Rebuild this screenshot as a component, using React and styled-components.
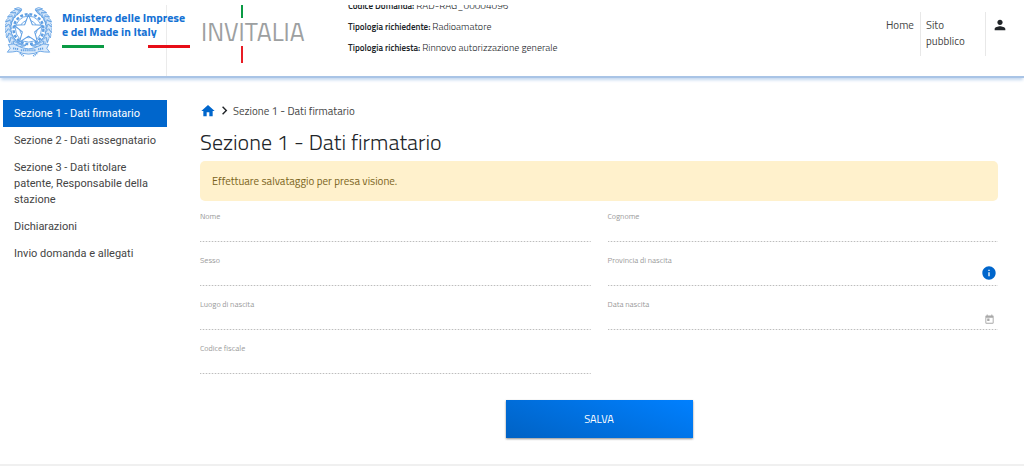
import React from "react";
import styled, { createGlobalStyle } from "styled-components";
import { MdHome, MdChevronRight, MdPerson, MdInfo, MdToday } from "react-icons/md";

const blue = "#0066cc";
const sans = `"Titillium Web", Roboto, "Noto Sans", sans-serif`;

const GlobalStyle = createGlobalStyle`
  *, *::before, *::after { box-sizing: border-box; }
  body {
    margin: 0;
    padding-top: 5px;
    background: #fff;
    color: #212529;
    font-family: ${sans};
    font-size: 11px;
    line-height: 16px;
  }
  h1, p, ul, ol, dl, dd { margin: 0; padding: 0; }
  ul, ol { list-style: none; }
  a { color: inherit; text-decoration: none; }
`;

const Header = styled.header`
  border-bottom: 2px solid #a9c4e6;
  box-shadow: 0 3px 3px -1px #c3d7ef;
`;

const HeaderInner = styled.div`
  display: flex;
  height: 71px;
  overflow: hidden;
`;

const MinistryCell = styled.div`
  flex: none;
  display: flex;
  gap: 10px;
  width: 167px;
  padding-left: 5px;
  border-right: 1px solid #ebebeb;
`;

const Emblem = styled.svg`
  flex: none;
  width: 47px;
  height: 52px;
`;

const MinistryName = styled.p`
  flex: none;
  width: 128px;
  padding-top: 6px;
  color: #1471d4;
  font-size: 12px;
  font-weight: 700;
  line-height: 14px;
  white-space: nowrap;
`;

const Flag = styled.span`
  display: flex;
  justify-content: space-between;
  margin-top: 6px;

  &::before, &::after {
    content: "";
    width: 42px;
    height: 3px;
    background: #0a9a44;
  }
  &::after { background: #e70d17; }
`;

const Invitalia = styled.div`
  flex: none;
  display: flex;
  align-items: flex-start;
  width: 104px;
  margin-left: 34px;
  color: #9da0a1;
  font-size: 25px;
  line-height: 18px;
  padding-top: 18px;
`;

const LongLetter = styled.span`
  display: flex;
  flex-direction: column;
  align-items: center;
  gap: 5px;
  margin-top: -18px;

  &::before, &::after {
    content: "";
    width: 2px;
    height: 13px;
    background: #0a9a44;
  }
  &::after { height: 17px; background: #e81c25; }
`;

const Request = styled.dl`
  align-self: flex-end;
  display: grid;
  gap: 5px;
  margin-left: 43px;
  padding-bottom: 20px;
  white-space: nowrap;
`;

const RequestItem = styled.div`
  display: flex;
  align-items: baseline;
  gap: 2px;

  dt { font-size: 9px; font-weight: 600; }
  dd { font-size: 10px; font-weight: 300; }
`;

const TopNav = styled.nav`
  display: flex;
  align-items: flex-start;
  margin-left: auto;
  padding: 7px 16px 0 0;
  color: #444;
`;

const NavLink = styled.a`
  width: ${(p) => (p.$wide ? 65 : 40)}px;
  height: 44px;
  padding: 5px 0 5px 5px;
  border-right: 1px solid #e8e8e8;
`;

const UserButton = styled.button`
  display: flex;
  margin: 5px 0 0 6px;
  padding: 0;
  border: 0;
  background: none;
  color: #212529;
  font-size: 16px;
`;

const Page = styled.div`
  display: flex;
  align-items: flex-start;
  gap: 33px;
  padding: 22px 26px 26px 3px;
  border-bottom: 2px solid #f0f0f0;
`;

const SideNav = styled.nav`
  flex: none;
  width: 164px;
  font-family: Roboto, sans-serif;
  color: #444;
`;

const SideLink = styled.a`
  display: block;
  padding: 6px 11px 5px;
  background: ${(p) => (p.$active ? blue : "transparent")};
  color: ${(p) => (p.$active ? "#fff" : "inherit")};
`;

const Main = styled.main`
  flex: 1;
  min-width: 0;
  padding-top: 2px;
`;

const Breadcrumb = styled.ol`
  display: flex;
  align-items: center;
  color: #444;

  li { display: flex; align-items: center; }
  a { color: ${blue}; }
  svg { display: block; }
`;

const Title = styled.h1`
  margin: 9px 0 5px;
  font-size: 22px;
  font-weight: 300;
  line-height: 28px;
`;

const Alert = styled.div`
  padding: 12px;
  border-radius: 5px;
  background: #fff1cc;
  color: #7a6320;
`;

const Fields = styled.div`
  display: grid;
  grid-template-columns: 1fr 1fr;
  gap: 13px 17px;
  margin-top: 10px;
`;

const Field = styled.div`
  display: flex;
  flex-direction: column;
`;

const Label = styled.label`
  color: #9b9b9b;
  font-size: 8px;
  line-height: 10px;
`;

const Control = styled.div`
  display: flex;
  height: 21px;
  padding-right: 2px;
  background: repeating-linear-gradient(90deg, #bdbdbd 0 1px, #ececec 1px 3px) bottom / 100% 1px no-repeat;
`;

const Input = styled.input`
  flex: 1;
  min-width: 0;
  height: 20px;
  padding: 0;
  border: 0;
  background: none;
  font: inherit;
`;

const IconButton = styled.button`
  display: flex;
  align-items: ${(p) => (p.$muted ? "center" : "flex-start")};
  justify-content: center;
  width: 14px;
  padding: 0;
  border: 0;
  background: none;
  color: ${(p) => (p.$muted ? "#a8a8a8" : blue)};

  svg { flex: none; }
`;

const Actions = styled.div`
  display: flex;
  justify-content: center;
  margin-top: 26px;
`;

const SaveButton = styled.button`
  width: 187px;
  height: 38px;
  border: 0;
  background: linear-gradient(20deg, #0062c4, #0080ff);
  box-shadow: 0 1px 2px rgba(0, 0, 0, 0.45);
  color: #fff;
  font-family: inherit;
  font-size: 11px;
`;

const leaves = Array.from({ length: 11 }, (_, i) => 208 + i * 13);

function Leaf({ angle }) {
  return (
    <path
      transform={`rotate(${angle} 24 24)`}
      d="M24 4 Q20 3 18 0 Q23 -1 25 3 Q23 6 18 7 Q20 3 24 4 M18 0 L24 4 L18 7"
    />
  );
}

function RepublicEmblem() {
  return (
    <Emblem viewBox="0 0 48 54" role="img" aria-label="Repubblica Italiana">
      <g fill="#d6e7f9" stroke="#5f9fe3" strokeWidth="0.7" strokeLinejoin="round">
        {leaves.map((a) => <Leaf key={a} angle={a} />)}
        <g transform="matrix(-1 0 0 1 48 0)">
          {leaves.map((a) => <Leaf key={a} angle={a} />)}
        </g>
      </g>
      <g fill="none" stroke="#5f9fe3">
        <circle cx="24" cy="25" r="15.5" strokeWidth="2.6" strokeDasharray="3 1.9" fill="#fff" />
        <circle cx="24" cy="25" r="13.5" strokeWidth="0.9" />
        <circle cx="24" cy="25" r="9" strokeWidth="0.9" />
        <path d="M24 10 L28 20.5 L39 21 L30.4 28 L33.4 38.5 L24 32.4 L14.6 38.5 L17.6 28 L9 21 L20 20.5Z" fill="#fff" strokeWidth="1.1" strokeLinejoin="round" />
        <path d="M3 41 Q9 39 14 43 Q24 48 34 43 Q39 39 45 41 L43 45 L46 49 Q40 49 36 48 Q24 54 12 48 Q8 49 2 49 L5 45Z" fill="#d9e9fa" strokeWidth="0.9" />
        <path d="M8 45 L14 46 M16 47 L32 47 M34 46 L40 45 M15 50 L19 53 M33 50 L29 53" strokeWidth="2" strokeDasharray="1.2 0.8" />
      </g>
    </Emblem>
  );
}

const sections = [
  "Sezione 1 - Dati firmatario",
  "Sezione 2 - Dati assegnatario",
  "Sezione 3 - Dati titolare patente, Responsabile della stazione",
  "Dichiarazioni",
  "Invio domanda e allegati",
];

const request = [
  ["Codice Domanda:", "RAD-RAG_00004096"],
  ["Tipologia richiedente:", "Radioamatore"],
  ["Tipologia richiesta:", "Rinnovo autorizzazione generale"],
];

const fields = [
  { id: "nome", label: "Nome" },
  { id: "cognome", label: "Cognome" },
  { id: "sesso", label: "Sesso" },
  { id: "provincia", label: "Provincia di nascita", icon: "info" },
  { id: "luogo", label: "Luogo di nascita" },
  { id: "data", label: "Data nascita", icon: "date" },
  { id: "codice", label: "Codice fiscale" },
];

export default function App() {
  return (
    <>
      <GlobalStyle />
      <Header>
        <HeaderInner>
          <MinistryCell>
            <RepublicEmblem />
            <MinistryName>
              Ministero delle Imprese<br />e del Made in Italy
              <Flag />
            </MinistryName>
          </MinistryCell>
          <Invitalia>
            INV<LongLetter>I</LongLetter>TALIA
          </Invitalia>
          <Request>
            {request.map(([term, value]) => (
              <RequestItem key={term}><dt>{term}</dt><dd>{value}</dd></RequestItem>
            ))}
          </Request>
          <TopNav>
            <NavLink href="#home">Home</NavLink>
            <NavLink href="#sito" $wide>Sito pubblico</NavLink>
            <UserButton type="button" aria-label="Profilo"><MdPerson /></UserButton>
          </TopNav>
        </HeaderInner>
      </Header>
      <Page>
        <SideNav>
          <ul>
            {sections.map((s, i) => (
              <li key={s}><SideLink href={`#sezione-${i + 1}`} $active={i === 0}>{s}</SideLink></li>
            ))}
          </ul>
        </SideNav>
        <Main>
          <Breadcrumb>
            <li>
              <a href="#home" aria-label="Home"><MdHome size={16} /></a>
              <MdChevronRight size={17} color="#212529" />
            </li>
            <li>Sezione 1 - Dati firmatario</li>
          </Breadcrumb>
          <Title>Sezione 1 - Dati firmatario</Title>
          <Alert role="alert">Effettuare salvataggio per presa visione.</Alert>
          <form onSubmit={(e) => e.preventDefault()}>
            <Fields>
              {fields.map((f) => (
                <Field key={f.id}>
                  <Label htmlFor={f.id}>{f.label}</Label>
                  <Control>
                    <Input id={f.id} disabled />
                    {f.icon === "info" && (
                      <IconButton type="button" aria-label="Informazioni"><MdInfo size={16} /></IconButton>
                    )}
                    {f.icon === "date" && (
                      <IconButton type="button" aria-label="Apri calendario" $muted><MdToday size={11} /></IconButton>
                    )}
                  </Control>
                </Field>
              ))}
            </Fields>
            <Actions><SaveButton>SALVA</SaveButton></Actions>
          </form>
        </Main>
      </Page>
    </>
  );
}
